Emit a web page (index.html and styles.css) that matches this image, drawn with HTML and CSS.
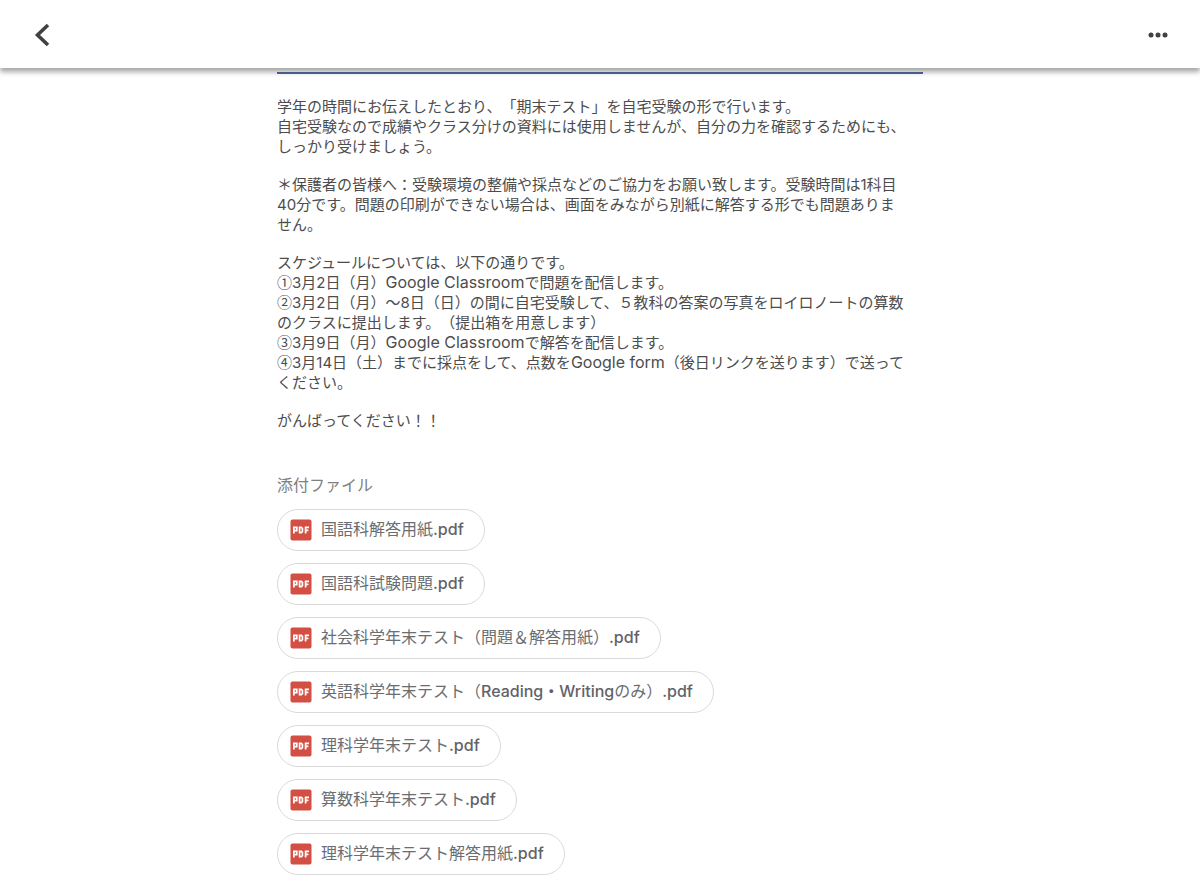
FILE: index.html
```
<!DOCTYPE html>
<html lang="ja">
<head>
  <meta charset="UTF-8">
  <meta name="viewport" content="width=device-width, initial-scale=1">
  <title>期末テスト</title>
  <link rel="stylesheet" href="styles.css">
</head>
<body>

  <!-- PDF icon, used by every attachment -->
  <svg class="sprite" aria-hidden="true">
    <symbol id="pdf" viewBox="0 0 22 22">
      <rect x="0.5" y="0.5" width="21" height="21" rx="2" fill="#d34f43"/>
      <g fill="none" stroke="#fff" stroke-width="1.7">
        <path d="M3.9 14.5V8.3H6.8V11.7H3.9"/>
        <path d="M9.6 8.3H11.3L12.4 9.3V12.7L11.3 13.7H9.6Z"/>
        <path d="M15.6 14.5V8.3H19M15.6 11.3H18.4"/>
      </g>
    </symbol>
  </svg>

  <header class="topbar">
    <button type="button" class="icon-button" aria-label="戻る">
      <svg width="24" height="28" viewBox="0 0 24 28">
        <path d="M18 4L7.5 14L18 24" fill="none" stroke="#414141" stroke-width="3.6"/>
      </svg>
    </button>
    <button type="button" class="icon-button" aria-label="その他">
      <svg width="24" height="24" viewBox="0 0 24 24" fill="#414141">
        <circle cx="5" cy="12" r="2.5"/>
        <circle cx="12" cy="12" r="2.5"/>
        <circle cx="19" cy="12" r="2.5"/>
      </svg>
    </button>
  </header>

  <main class="content">
    <div class="post">
      <p>学年の時間にお伝えしたとおり、「期末テスト」を自宅受験の形で行います。<br>
      自宅受験なので成績やクラス分けの資料には使用しませんが、自分の力を確認するためにも、<br>
      しっかり受けましょう。</p>

      <p>＊保護者の皆様へ：受験環境の整備や採点などのご協力をお願い致します。受験時間は1科目<br>
      40分です。問題の印刷ができない場合は、画面をみながら別紙に解答する形でも問題ありま<br>
      せん。</p>

      <p>スケジュールについては、以下の通りです。<br>
      <span class="num">①</span>3月2日（月）<span class="en">Google Classroom</span>で問題を配信します。<br>
      <span class="num">②</span>3月2日（月）〜8日（日）の間に自宅受験して、５教科の答案の写真をロイロノートの算数<br>
      のクラスに提出します。（提出箱を用意します）<br>
      <span class="num">③</span>3月9日（月）<span class="en">Google Classroom</span>で解答を配信します。<br>
      <span class="num">④</span>3月14日（土）までに採点をして、点数を<span class="en">Google form</span>（後日リンクを送ります）で送って<br>
      ください。</p>

      <p>がんばってください！！</p>
    </div>

    <h2>添付ファイル</h2>
    <div class="files">
      <a href="#" class="file"><svg class="pdf"><use href="#pdf"/></svg><span>国語科解答用紙<b>.pdf</b></span></a>
      <a href="#" class="file"><svg class="pdf"><use href="#pdf"/></svg><span>国語科試験問題<b>.pdf</b></span></a>
      <a href="#" class="file"><svg class="pdf"><use href="#pdf"/></svg><span>社会科学年末テスト（問題＆解答用紙）<b>.pdf</b></span></a>
      <a href="#" class="file"><svg class="pdf"><use href="#pdf"/></svg><span>英語科学年末テスト（<b>Reading・Writing</b>のみ）<b>.pdf</b></span></a>
      <a href="#" class="file"><svg class="pdf"><use href="#pdf"/></svg><span>理科学年末テスト<b>.pdf</b></span></a>
      <a href="#" class="file"><svg class="pdf"><use href="#pdf"/></svg><span>算数科学年末テスト<b>.pdf</b></span></a>
      <a href="#" class="file"><svg class="pdf"><use href="#pdf"/></svg><span>理科学年末テスト解答用紙<b>.pdf</b></span></a>
    </div>
  </main>

</body>
</html>
```
FILE: styles.css
```
* {
  box-sizing: border-box;
}

body {
  margin: 0;
  background: #fff;
  color: #4c4c4c;
  font-family: Inter, "Noto Sans CJK JP", sans-serif;
  text-spacing-trim: space-all;
}

.sprite {
  display: none;
}

.topbar {
  position: sticky;
  top: 0;
  display: flex;
  justify-content: space-between;
  align-items: center;
  height: 68px;
  padding: 2px 22px 0;
  background: #fff;
  box-shadow: 0 4px 5px rgba(0, 0, 0, 0.35);
}

.icon-button {
  display: flex;
  align-items: center;
  justify-content: center;
  width: 40px;
  height: 40px;
  padding: 0;
  border: none;
  background: none;
  cursor: pointer;
}

.content {
  max-width: 648px;
  padding: 0 1px;
  margin: 4px auto 0;
}

.post {
  border-top: 2px solid #536ba3;
  padding-top: 23px;
  font-size: 15px;
  line-height: 20px;
}

.post p {
  margin: 0 0 18px;
}

/* Inter draws its circled digits too large */
.num {
  font-family: "Noto Sans CJK JP", sans-serif;
  line-height: 1;
}

.en {
  font-size: 16px;
  line-height: 1;
}

h2 {
  margin: 42px 0 12px;
  font-size: 16px;
  font-weight: 400;
  line-height: 24px;
  color: #808080;
}

.files {
  display: flex;
  flex-direction: column;
  align-items: flex-start;
  gap: 12px;
}

.file {
  display: flex;
  align-items: center;
  gap: 9px;
  height: 42px;
  padding: 0 20px 0 12px;
  border: 1px solid #dadada;
  border-radius: 21px;
  font-size: 16px;
  line-height: 24px;
  color: #6a6d71;
  text-decoration: none;
}

.file span {
  padding-bottom: 2px;
}

.file b {
  font-weight: 500;
  color: #5f6368;
}

.file:hover {
  background: #f5f5f5;
}

.pdf {
  width: 22px;
  height: 22px;
}
```
